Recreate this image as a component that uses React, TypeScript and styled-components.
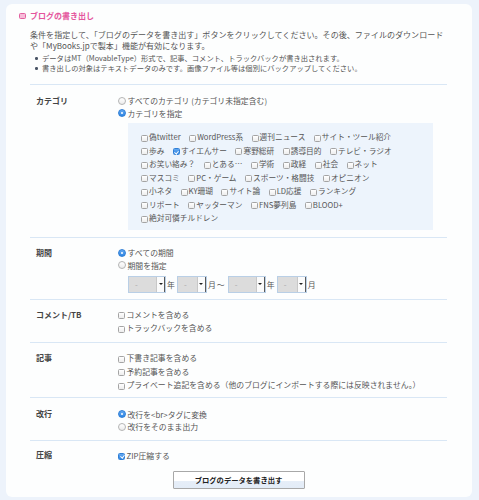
import React from 'react';
import styled, { createGlobalStyle, css } from 'styled-components';

const Global = createGlobalStyle`
  html, body { margin: 0; padding: 0; }
  body {
    background: #edf3fb;
    font-family: "Noto Sans CJK JP", "Noto Sans", sans-serif;
    color: #555;
  }
`;

const Page = styled.div`
  width: 479px;
  height: 500px;
  box-sizing: border-box;
  padding: 4px 7px 3px 6px;
  background: #edf3fb;
`;

const Panel = styled.div`
  height: 100%;
  box-sizing: border-box;
  background: #fdfefe;
  border-radius: 6px;
  padding: 6px 25px 0 24px;
`;

const Title = styled.h2`
  margin: 0 0 0 -11px;
  display: flex;
  align-items: center;
  gap: 4px;
  height: 12px;
  font-size: 8px;
  line-height: 12px;
  font-weight: bold;
  color: #e4559c;
`;

const TitleIcon = styled.span`
  width: 7px;
  height: 6px;
  box-sizing: border-box;
  border-radius: 1.5px;
  background: #f7bcd9;
  border: 1px solid #e2609f;
`;

const Intro = styled.p`
  margin: 6.5px 0 0;
  font-size: 8.05px;
  line-height: 11px;
  white-space: nowrap;
  color: #555;
`;

const Notes = styled.ul`
  margin: 2.5px 0 0;
  padding: 0;
  list-style: none;
`;

const Note = styled.li`
  position: relative;
  padding-left: 12px;
  font-size: 7.3px;
  line-height: 10px;
  white-space: nowrap;
  color: #555;
  &::before {
    content: "";
    position: absolute;
    left: 5px;
    top: 4px;
    width: 2.5px;
    height: 2.5px;
    border-radius: 50%;
    background: #4a5566;
  }
`;

const Form = styled.div`
  margin-top: 11px;
`;

const Section = styled.div<{ $pt: number; $pb: number }>`
  display: grid;
  grid-template-columns: 82px 1fr;
  border-top: 1px solid #d9e7f5;
  padding: ${(p) => p.$pt}px 0 ${(p) => p.$pb}px 6px;
`;

const Label = styled.div<{ $h: number }>`
  font-size: 8px;
  font-weight: bold;
  color: #444;
  height: ${(p) => p.$h}px;
  line-height: ${(p) => p.$h}px;
  white-space: nowrap;
`;

const Controls = styled.div`
  display: flex;
  flex-direction: column;
`;

const OptionRow = styled.label<{ $h: number }>`
  display: flex;
  align-items: center;
  gap: 1.5px;
  height: ${(p) => p.$h}px;
  font-size: 7.85px;
  color: #555;
  white-space: nowrap;
`;

const RadioMark = styled.span<{ $on?: boolean }>`
  position: relative;
  flex: none;
  width: 8px;
  height: 8px;
  box-sizing: border-box;
  border-radius: 50%;
  border: 1px solid #b4b4b4;
  background: linear-gradient(#ffffff, #ececec);
  ${(p) =>
    p.$on &&
    css`
      border-color: #2f7fd6;
      background: linear-gradient(#64a8f0, #2f86e4);
      &::after {
        content: "";
        position: absolute;
        left: 1.8px;
        top: 1.8px;
        width: 2.4px;
        height: 2.4px;
        border-radius: 50%;
        background: #fff;
      }
    `}
`;

const CheckMark = styled.span<{ $on?: boolean }>`
  position: relative;
  flex: none;
  width: 7px;
  height: 7px;
  margin-top: 3px;
  box-sizing: border-box;
  border-radius: 1.5px;
  border: 1px solid #a4a4a4;
  background: linear-gradient(#ffffff, #ededed);
  ${(p) =>
    p.$on &&
    css`
      border-color: #2f7fd6;
      background: linear-gradient(#64a8f0, #2f86e4);
      &::after {
        content: "";
        position: absolute;
        left: 1.6px;
        top: 0.3px;
        width: 1.6px;
        height: 3.2px;
        border: solid #fff;
        border-width: 0 1px 1px 0;
        transform: rotate(40deg);
      }
    `}
`;

const CategoryBox = styled.div`
  margin: 3.5px 0 0 10px;
  width: 305px;
  box-sizing: border-box;
  background: #edf4fc;
  padding: 7px 0 5px 13px;
`;

const CategoryRow = styled.div`
  display: flex;
  gap: 8.5px;
  height: 13.5px;
  align-items: center;
`;

const CategoryItem = styled.label`
  display: inline-flex;
  align-items: center;
  gap: 1px;
  font-size: 7.7px;
  color: #555;
  white-space: nowrap;
`;

const DateRow = styled.div`
  display: flex;
  align-items: center;
  margin: 4px 0 0 10px;
  height: 17px;
  font-size: 7.9px;
  color: #555;
`;

const SelectBox = styled.div<{ $w: number; $ml: number }>`
  display: flex;
  width: ${(p) => p.$w}px;
  height: 17px;
  margin-left: ${(p) => p.$ml}px;
  box-sizing: border-box;
  border: 1px solid #b9cfe6;
  background: #dcdcdc;
`;

const SelectValue = styled.span`
  flex: 1;
  padding-left: 6px;
  line-height: 15px;
  font-size: 8px;
  color: #aaa;
`;

const SelectArrow = styled.span`
  position: relative;
  width: 7px;
  flex: none;
  background: #fbfbfb;
  border-left: 1px solid #c8c8c8;
  border-right: 1px solid #5a5a5a;
  &::after {
    content: "";
    position: absolute;
    left: 1.5px;
    top: 6px;
    border-left: 2px solid transparent;
    border-right: 2px solid transparent;
    border-top: 2.5px solid #222;
  }
`;

const Unit = styled.span<{ $ml?: number }>`
  margin-left: ${(p) => p.$ml ?? 1}px;
  line-height: 17px;
`;

const ExportButton = styled.button`
  display: block;
  margin: 9px auto 0;
  width: 132px;
  height: 18px;
  padding: 0;
  box-sizing: border-box;
  border: 1px solid #a8a8a8;
  border-radius: 1px;
  background: linear-gradient(#ffffff 0%, #ffffff 55%, #e6eef8 56%, #e3ecf7 100%);
  font-family: "Noto Sans CJK JP", "Noto Sans", sans-serif;
  font-size: 7.3px;
  font-weight: bold;
  color: #222;
`;

const categoryRows: { name: string; on?: boolean }[][] = [
  [{ name: '偽twitter' }, { name: 'WordPress系' }, { name: '週刊ニュース' }, { name: 'サイト・ツール紹介' }],
  [{ name: '歩み' }, { name: 'すイエんサー', on: true }, { name: '寒野総研' }, { name: '誘導目的' }, { name: 'テレビ・ラジオ' }],
  [{ name: 'お笑い絡み？' }, { name: 'とある…' }, { name: '学術' }, { name: '政経' }, { name: '社会' }, { name: 'ネット' }],
  [{ name: 'マスコミ' }, { name: 'PC・ゲーム' }, { name: 'スポーツ・格闘技' }, { name: 'オピニオン' }],
  [{ name: '小ネタ' }, { name: 'KY珊瑚' }, { name: 'サイト論' }, { name: 'LD応援' }, { name: 'ランキング' }],
  [{ name: 'リポート' }, { name: 'ヤッターマン' }, { name: 'FNS夢列島' }, { name: 'BLOOD+' }],
  [{ name: '絶対可憐チルドレン' }],
];

const Radio = ({ on, children }: { on?: boolean; children: React.ReactNode }) => (
  <OptionRow $h={12.5}>
    <RadioMark $on={on} />
    {children}
  </OptionRow>
);

const Check = ({ on, children }: { on?: boolean; children: React.ReactNode }) => (
  <OptionRow $h={13.5}>
    <CheckMark $on={on} />
    {children}
  </OptionRow>
);

const Select = ({ w, ml }: { w: number; ml: number }) => (
  <SelectBox $w={w} $ml={ml}>
    <SelectValue>-</SelectValue>
    <SelectArrow />
  </SelectBox>
);

export default function App() {
  return (
    <>
      <Global />
      <Page>
        <Panel>
          <Title>
            <TitleIcon />
            ブログの書き出し
          </Title>
          <Intro>
            条件を指定して、「ブログのデータを書き出す」ボタンをクリックしてください。その後、ファイルのダウンロード
            <br />
            や「MyBooks.jpで製本」機能が有効になります。
          </Intro>
          <Notes>
            <Note>データはMT（MovableType）形式で、記事、コメント、トラックバックが書き出されます。</Note>
            <Note>書き出しの対象はテキストデータのみです。画像ファイル等は個別にバックアップしてください。</Note>
          </Notes>

          <Form>
            <Section $pt={9.5} $pb={7}>
              <Label $h={12.5}>カテゴリ</Label>
              <Controls>
                <Radio>すべてのカテゴリ (カテゴリ未指定含む)</Radio>
                <Radio on>カテゴリを指定</Radio>
                <CategoryBox>
                  {categoryRows.map((row, i) => (
                    <CategoryRow key={i}>
                      {row.map((c) => (
                        <CategoryItem key={c.name}>
                          <CheckMark $on={c.on} />
                          {c.name}
                        </CategoryItem>
                      ))}
                    </CategoryRow>
                  ))}
                </CategoryBox>
              </Controls>
            </Section>

            <Section $pt={9} $pb={6}>
              <Label $h={12.5}>期間</Label>
              <Controls>
                <Radio on>すべての期間</Radio>
                <Radio>期間を指定</Radio>
                <DateRow>
                  <Select w={38} ml={0} />
                  <Unit>年</Unit>
                  <Select w={30} ml={2} />
                  <Unit>月</Unit>
                  <Unit $ml={1}>〜</Unit>
                  <Select w={38} ml={3} />
                  <Unit>年</Unit>
                  <Select w={30} ml={2} />
                  <Unit>月</Unit>
                </DateRow>
              </Controls>
            </Section>

            <Section $pt={8} $pb={7}>
              <Label $h={13.5}>コメント/TB</Label>
              <Controls>
                <Check>コメントを含める</Check>
                <Check>トラックバックを含める</Check>
              </Controls>
            </Section>

            <Section $pt={8.3} $pb={6}>
              <Label $h={13.5}>記事</Label>
              <Controls>
                <Check>下書き記事を含める</Check>
                <Check>予約記事を含める</Check>
                <Check>プライベート追記を含める（他のブログにインポートする際には反映されません。）</Check>
              </Controls>
            </Section>

            <Section $pt={9.7} $pb={7.2}>
              <Label $h={12.5}>改行</Label>
              <Controls>
                <Radio on>改行を&lt;br&gt;タグに変換</Radio>
                <Radio>改行をそのまま出力</Radio>
              </Controls>
            </Section>

            <Section $pt={7.2} $pb={0}>
              <Label $h={13.5}>圧縮</Label>
              <Controls>
                <Check on>ZIP圧縮する</Check>
              </Controls>
            </Section>
          </Form>

          <ExportButton type="button">ブログのデータを書き出す</ExportButton>
        </Panel>
      </Page>
    </>
  );
}
